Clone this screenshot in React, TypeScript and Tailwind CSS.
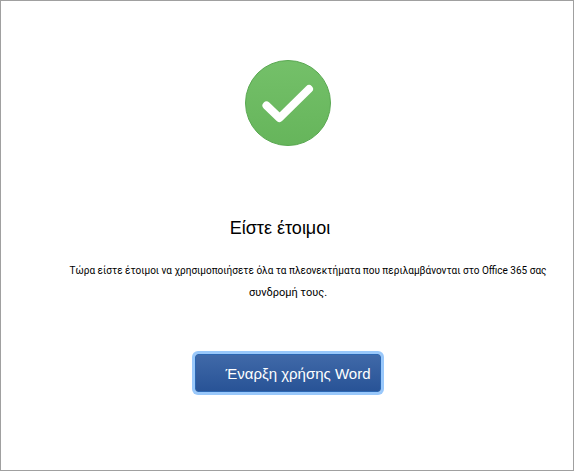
const CheckBadge = () => (
  <svg viewBox="0 0 86 86" className="size-[86px]" role="img" aria-label="OK">
    <defs>
      <linearGradient id="badge" x1="0" y1="0" x2="0" y2="1">
        <stop offset="0" stopColor="#74c069" />
        <stop offset="1" stopColor="#66b55b" />
      </linearGradient>
    </defs>
    <circle cx="43" cy="43" r="42.5" fill="url(#badge)" stroke="#5aa852" />
    <path
      d="M21.5 45.5 L34.5 58 L64 29"
      fill="none"
      stroke="#ffffff"
      strokeWidth="8"
      strokeLinecap="round"
      strokeLinejoin="round"
    />
  </svg>
);

const App = () => {
  return (
    <main className="min-h-screen flex flex-col items-center border border-[#a0a0a0] bg-white pt-[59px] pl-0.5 pb-16 font-['Liberation_Sans',Arial,sans-serif] text-black">
      <CheckBadge />

      <h1 className="mt-[70px] pr-4 text-lg leading-6">Είστε έτοιμοι</h1>

      <p className="mt-5 w-full text-center font-['Roboto',sans-serif] text-[10px] leading-[22px]">
        <span className="block pl-10">
          Τώρα είστε έτοιμοι να χρησιμοποιήσετε όλα τα πλεονεκτήματα που περιλαμβάνονται στο Office 365 σας
        </span>
        <span className="block text-[11px]">συνδρομή τους.</span>
      </p>

      <button
        type="button"
        className="mt-[50px] h-[38px] w-[186px] rounded-[3px] border border-[#2b67b3] bg-gradient-to-b from-[#4069a8] to-[#285396] pt-0.5 pl-5 text-center text-[15px] text-white ring-3 ring-[#99c8fb] whitespace-nowrap"
      >
        Έναρξη χρήσης Word
      </button>
    </main>
  );
};

export default App;
